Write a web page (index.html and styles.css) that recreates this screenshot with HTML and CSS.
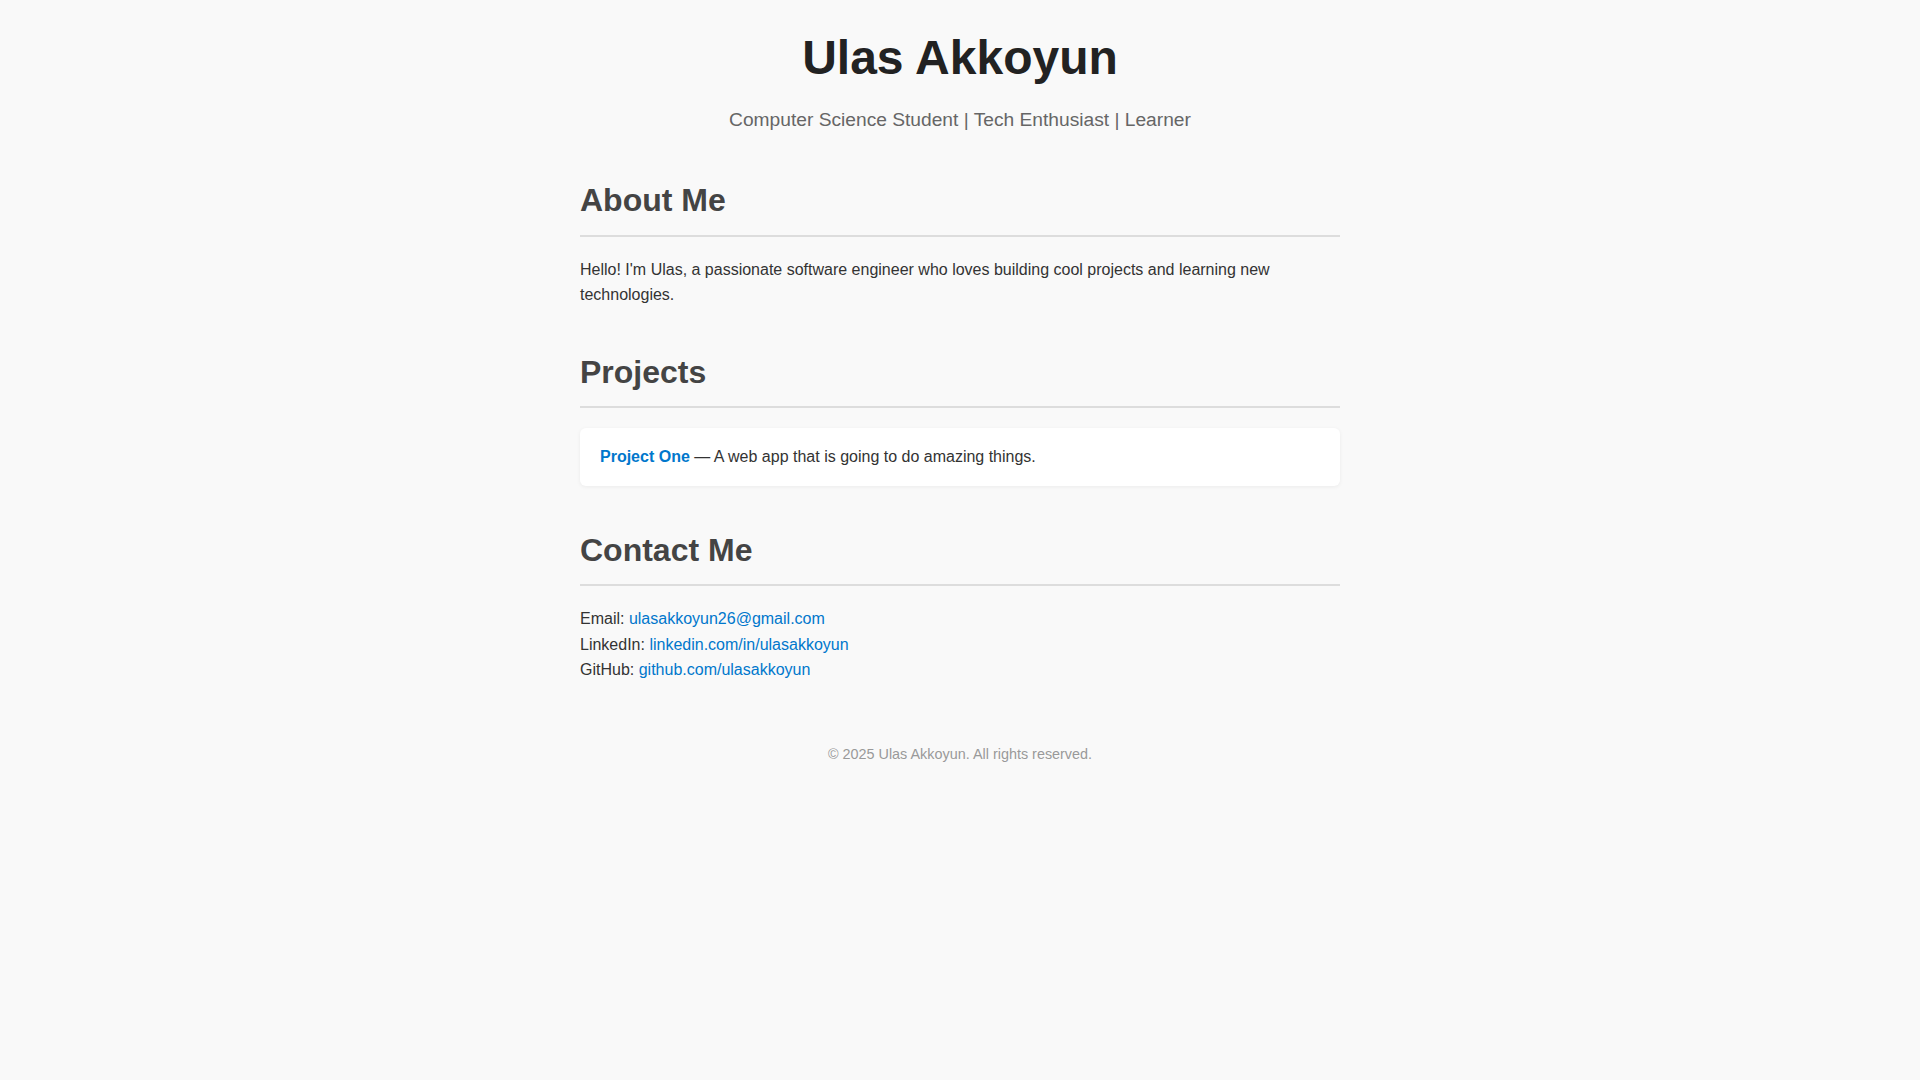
FILE: index.html
```html
<!DOCTYPE html>
<html lang="en">
<head>
<meta charset="UTF-8">
<title>Ulas Akkoyun</title>
<link rel="stylesheet" href="styles.css">
</head>
<body>
<header class="site-header">
  <h1 class="site-title">Ulas Akkoyun</h1>
  <p class="site-subtitle">Computer Science Student | Tech Enthusiast | Learner</p>
</header>
<main class="container">
  <section class="section">
    <h2 class="section-title">About Me</h2>
    <p class="text">Hello! I'm Ulas, a passionate software engineer who loves building cool projects and learning new technologies.</p>
  </section>
  <section class="section">
    <h2 class="section-title">Projects</h2>
    <div class="project-card">
      <a class="project-link" href="#">Project One</a> — A web app that is going to do amazing things.
    </div>
  </section>
  <section class="section">
    <h2 class="section-title">Contact Me</h2>
    <div class="contact-list">
      <div class="contact-line">Email: <a class="link" href="#">ulasakkoyun26@gmail.com</a></div>
      <div class="contact-line">LinkedIn: <a class="link" href="#">linkedin.com/in/ulasakkoyun</a></div>
      <div class="contact-line">GitHub: <a class="link" href="#">github.com/ulasakkoyun</a></div>
    </div>
  </section>
</main>
<footer class="site-footer">
  <p class="footer-text">© 2025 Ulas Akkoyun. All rights reserved.</p>
</footer>
</body>
</html>
```
FILE: styles.css
```css
html, body {
  margin: 0;
  padding: 0;
}
body {
  background: #f9f9f9;
  color: #333;
  font-family: "Liberation Sans", Arial, sans-serif;
  font-size: 16px;
  line-height: 1.6;
}
.site-header {
  text-align: center;
  padding-top: 29px;
}
.site-title {
  margin: 0;
  font-size: 48px;
  line-height: 1.2;
  font-weight: bold;
  color: #222;
}
.site-subtitle {
  margin: 18px 0 0;
  font-size: 19.2px;
  color: #666;
}
.container {
  width: 760px;
  margin: 46px auto 0;
}
.section + .section {
  margin-top: 45px;
}
.section-title {
  margin: 0 0 20px;
  padding-bottom: 15px;
  border-bottom: 2px solid #ddd;
  font-size: 32px;
  line-height: 1.2;
  font-weight: bold;
  color: #444;
}
.text {
  margin: 0;
}
.project-card {
  background: #fff;
  border-radius: 6px;
  padding: 16px 20px;
  box-shadow: 0 1px 4px rgba(0, 0, 0, 0.06);
}
.project-link {
  color: #0077cc;
  font-weight: bold;
  text-decoration: none;
}
.link {
  color: #0077cc;
  text-decoration: none;
}
.site-footer {
  text-align: center;
  padding-top: 60px;
}
.footer-text {
  margin: 0;
  font-size: 14.4px;
  color: #999;
}
```
